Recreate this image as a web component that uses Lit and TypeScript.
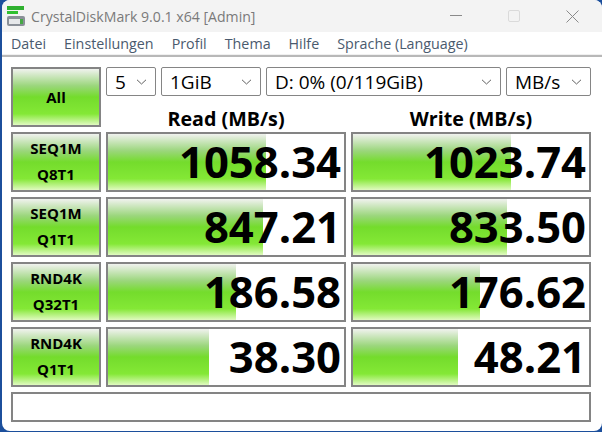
import { LitElement, html, css, svg } from "lit";
import { customElement } from "lit/decorators.js";

const rows = [
  { a: "SEQ1M", b: "Q8T1", r: "1058.34", rw: 158, w: "1023.74", ww: 158 },
  { a: "SEQ1M", b: "Q1T1", r: "847.21", rw: 155, w: "833.50", ww: 154 },
  { a: "RND4K", b: "Q32T1", r: "186.58", rw: 128, w: "176.62", ww: 127 },
  { a: "RND4K", b: "Q1T1", r: "38.30", rw: 101, w: "48.21", ww: 105 },
];

const chevron = svg`<svg class="chev" width="11" height="6" viewBox="0 0 11 6"><path d="M1 .8 5.5 5 10 .8" fill="none" stroke="#606060" stroke-width="1"/></svg>`;

@customElement("app-root")
export class AppRoot extends LitElement {
  static styles = css`
    :host {
      display: block;
      width: 602px;
      height: 432px;
      overflow: hidden;
      background: #1c4f9c;
      font-family: "Open Sans", "Noto Sans", sans-serif;
      color: #000;
    }
    .win {
      height: 431px;
      margin-left: 2px;
      box-sizing: border-box;
      background: #fff;
      border-radius: 8px;
      overflow: hidden;
      display: flex;
      flex-direction: column;
    }
    .title {
      height: 32px;
      background: #f3f3f3;
      display: flex;
      align-items: center;
      flex: none;
    }
    .logo { margin-left: 2px; }
    .title .t {
      margin-left: 5px;
      font-size: 14.1px;
      color: #7a7a7a;
      flex: 1;
    }
    .ctl { width: 58px; display: flex; justify-content: center; align-items: center; }
    .ctls { display: flex; margin-right: 1px; }
    .menu {
      height: 25px;
      flex: none;
      box-sizing: border-box;
      background: #fff;
      border-bottom: 2px solid #b8b8b8;
      box-shadow: inset 0 -1px 0 #f0f0f0;
      display: flex;
      align-items: center;
      padding-left: 9px;
      gap: 18px;
      font-size: 14.3px;
      color: #4a5a6e;
    }
    .grid {
      display: grid;
      grid-template-columns: 90px 240px 240px;
      column-gap: 5px;
      padding: 10px 0 0 9px;
    }
    .all, .lab, .cell, .msg {
      box-sizing: border-box;
      border: 2px solid #848484;
    }
    .all, .lab {
      background: linear-gradient(#f0f2ee 0%, #9bd67c 30%, #74dc2c 50%, #84e836 80%, #e0fac0 100%);
      display: flex;
      flex-direction: column;
      align-items: center;
      justify-content: center;
      font-weight: 700;
      font-size: 15px;
    }
    .all { height: 60px; grid-row: span 2; }
    .selects {
      grid-column: 2 / 4;
      display: flex;
      gap: 5px;
      height: 30px;
    }
    .sel {
      box-sizing: border-box;
      border: 1px solid #858585;
      border-radius: 2px;
      height: 29px;
      display: flex;
      align-items: center;
      justify-content: space-between;
      padding: 0 8px;
      font-size: 19px;
      background: #fff;
    }
    .s1 { width: 50px; }
    .s2 { width: 100px; }
    .s3 { width: 235px; }
    .s4 { width: 85px; }
    .chev { flex: none; }
    .head {
      height: 35px;
      display: flex;
      align-items: center;
      justify-content: center;
      font-weight: 700;
      font-size: 19.7px;
      padding-top: 8px;
      box-sizing: border-box;
    }
    .lab { height: 60px; margin-bottom: 5px; line-height: 26px; padding-bottom: 2px; }
    .cell {
      height: 60px;
      margin-bottom: 5px;
      position: relative;
      display: flex;
      align-items: center;
      justify-content: flex-end;
      background: #fff;
    }
    .bar {
      position: absolute;
      left: 0; top: 0; bottom: 0;
      background: linear-gradient(#f0f2ee 0%, #9bd67c 30%, #74dc2c 50%, #84e836 80%, #e0fac0 100%);
    }
    .num {
      position: relative;
      font-weight: 700;
      font-size: 43.6px;
      line-height: 1;
      padding-right: 3px;
    }
    .msg { margin: 0 0 0 9px; width: 580px; height: 30px; flex: none; }
  `;

  render() {
    return html`<div class="win">
      <div class="title">
        <svg class="logo" width="22" height="24" viewBox="0 0 22 24">
          <rect x="3" y="2" width="17" height="4" fill="#2fb02f"/>
          <rect x="3" y="7" width="11" height="3" fill="#30c030"/>
          <rect x="3" y="12" width="18" height="10" rx="2" fill="#8a9098"/>
          <rect x="5" y="15" width="14" height="5" fill="#e6e8ea"/>
          <rect x="16" y="15" width="3" height="5" fill="#46a846"/>
        </svg>
        <span class="t">CrystalDiskMark 9.0.1 x64 [Admin]</span>
        <div class="ctls">
          <div class="ctl"><svg width="12" height="2"><rect width="12" height="1" fill="#8a8a8a"/></svg></div>
          <div class="ctl"><svg width="12" height="12"><rect x=".5" y=".5" width="11" height="11" rx="1.5" fill="none" stroke="#dadada"/></svg></div>
          <div class="ctl"><svg width="13" height="13"><path d="M.5.5l12 12M12.5.5l-12 12" stroke="#8a8a8a" fill="none"/></svg></div>
        </div>
      </div>
      <div class="menu">
        <span>Datei</span><span>Einstellungen</span><span>Profil</span><span>Thema</span><span>Hilfe</span><span>Sprache (Language)</span>
      </div>
      <div class="grid">
        <div class="all">All</div>
        <div class="selects">
          <div class="sel s1"><span>5</span>${chevron}</div>
          <div class="sel s2"><span>1GiB</span>${chevron}</div>
          <div class="sel s3"><span>D: 0% (0/119GiB)</span>${chevron}</div>
          <div class="sel s4"><span>MB/s</span>${chevron}</div>
        </div>
        <div class="head">Read (MB/s)</div>
        <div class="head">Write (MB/s)</div>
        ${rows.map(
          (r) => html`
            <div class="lab"><span>${r.a}</span><span>${r.b}</span></div>
            <div class="cell"><div class="bar" style="width:${r.rw}px"></div><span class="num">${r.r}</span></div>
            <div class="cell"><div class="bar" style="width:${r.ww}px"></div><span class="num">${r.w}</span></div>
          `
        )}
      </div>
      <div class="msg"></div>
    </div>`;
  }
}
